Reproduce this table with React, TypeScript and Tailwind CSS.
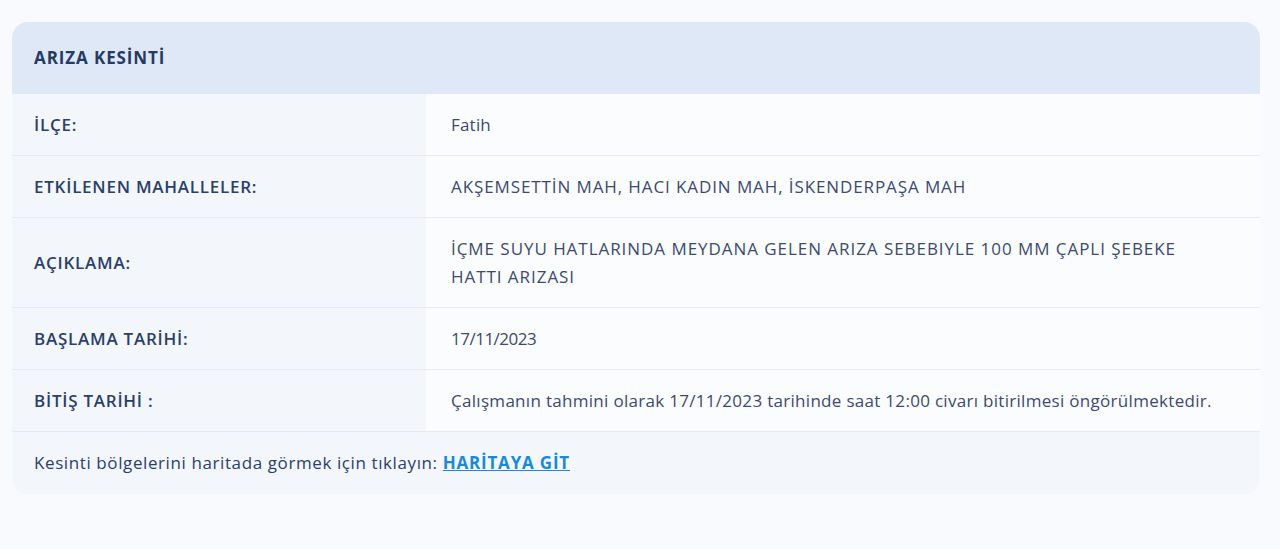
import React from "react";

const rows: { label: string; value: React.ReactNode; track: string }[] = [
  { label: "İLÇE:", value: "Fatih", track: "tracking-[0.2px]" },
  {
    label: "ETKİLENEN MAHALLELER:",
    value: "AKŞEMSETTİN MAH, HACI KADIN MAH, İSKENDERPAŞA MAH",
    track: "tracking-[0.9px]",
  },
  {
    label: "AÇIKLAMA:",
    value: (
      <>
        İÇME SUYU HATLARINDA MEYDANA GELEN ARIZA SEBEBIYLE 100 MM ÇAPLI ŞEBEKE
        <br />
        HATTI ARIZASI
      </>
    ),
    track: "tracking-[0.95px]",
  },
  { label: "BAŞLAMA TARİHİ:", value: "17/11/2023", track: "tracking-[-0.5px]" },
  {
    label: "BİTİŞ TARİHİ :",
    value: "Çalışmanın tahmini olarak 17/11/2023 tarihinde saat 12:00 civarı bitirilmesi öngörülmektedir.",
    track: "tracking-[0.3px]",
  },
];

export default function App() {
  return (
    <div
      className="min-h-[549px] w-full bg-[#f8fafd] pl-3 pr-5 pt-[22px]"
      style={{ fontFamily: "'Open Sans', 'Noto Sans', sans-serif" }}
    >
      <div className="overflow-hidden rounded-2xl bg-[#f3f6fb]">
        <div className="bg-[#dee8f7] px-[22px] py-6 text-[17px] font-bold leading-6 tracking-[0.9px] text-[#253a64]">
          ARIZA KESİNTİ
        </div>
        {rows.map((r, i) => (
          <div key={i} className="flex border-b border-[#e6ebf2]">
            <div className="flex w-[414px] shrink-0 items-center bg-[#f3f6fb] px-[22px] pt-[17px] pb-4 text-[17px] font-semibold leading-7 tracking-[0.75px] text-[#2b3f69]">
              {r.label}
            </div>
            <div
              className={`flex flex-1 items-center bg-[#fafcfe] px-[25px] pt-[17px] pb-4 text-[17px] leading-7 text-[#3e4a6c] ${r.track}`}
            >
              <div>{r.value}</div>
            </div>
          </div>
        ))}
        <div className="px-[22px] pt-[17px] pb-[17px] text-[17px] leading-7 tracking-[0.6px] text-[#2b3f69]">
          Kesinti bölgelerini haritada görmek için tıklayın:{" "}
          <a href="#" className="font-bold tracking-[0.8px] text-[#1b8ad6] underline">
            HARİTAYA GİT
          </a>
        </div>
      </div>
    </div>
  );
}
